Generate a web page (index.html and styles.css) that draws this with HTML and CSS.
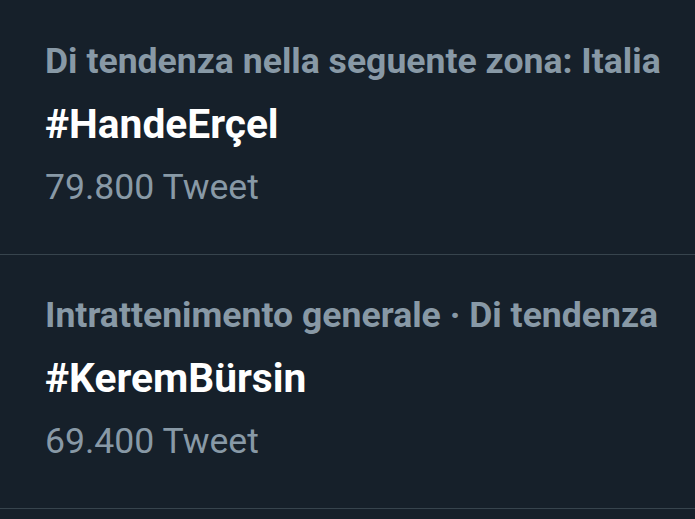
FILE: index.html
```html
<!DOCTYPE html>
<html lang="it">
<head>
<meta charset="utf-8">
<link rel="stylesheet" href="styles.css">
</head>
<body>
<div class="list">
  <div class="trend">
    <div class="meta">Di tendenza nella seguente zona: Italia</div>
    <div class="name">#HandeErçel</div>
    <div class="count">79.800 Tweet</div>
  </div>
  <div class="trend">
    <div class="meta">Intrattenimento generale · Di tendenza</div>
    <div class="name">#KeremBürsin</div>
    <div class="count">69.400 Tweet</div>
  </div>
</div>
</body>
</html>
```
FILE: styles.css
```css
html, body {
  margin: 0;
  padding: 0;
  background: #16202a;
  width: 695px;
  height: 519px;
  overflow: hidden;
}
.list {
  display: flex;
  flex-direction: column;
  padding-top: 1px;
  font-family: Roboto, "Noto Sans", sans-serif;
}
.trend {
  box-sizing: border-box;
  height: 254px;
  border-bottom: 1px solid #37444d;
  padding-left: 45px;
  padding-top: 38px;
  display: flex;
  flex-direction: column;
}
.meta {
  color: #8899a6;
  font-weight: 700;
  font-size: 35.6px;
  line-height: 44px;
  white-space: nowrap;
}
.name {
  color: #ffffff;
  font-weight: 700;
  font-size: 40.7px;
  line-height: 60px;
  margin-top: 11px;
  white-space: nowrap;
}
.count {
  color: #8899a6;
  font-weight: 400;
  font-size: 35.6px;
  line-height: 44px;
  margin-top: 11px;
  white-space: nowrap;
}
```
